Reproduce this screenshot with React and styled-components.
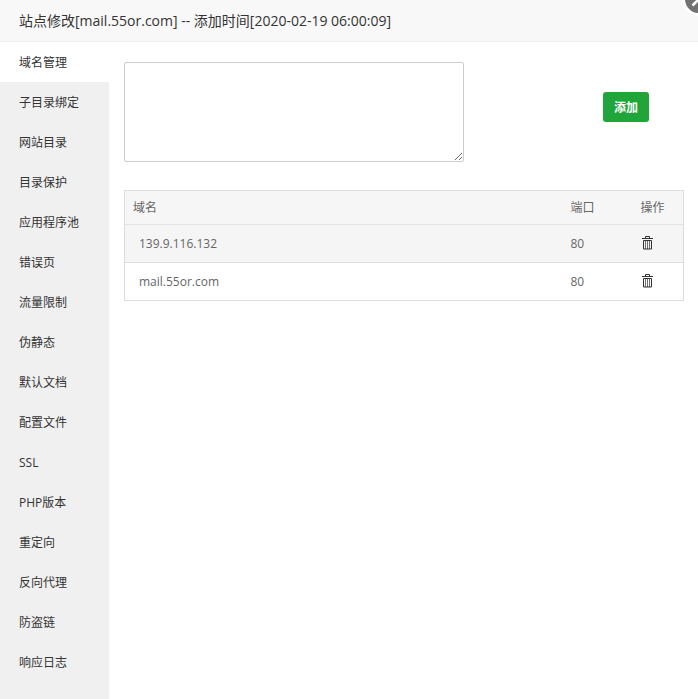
import styled, { createGlobalStyle } from 'styled-components'

const GlobalStyle = createGlobalStyle`
  * {
    box-sizing: border-box;
  }
  body {
    margin: 0;
    overflow: hidden;
    background: #fff;
    color: #333;
    font-family: "Open Sans", "Noto Sans CJK SC", sans-serif;
    font-size: 12px;
  }
`
const DialogStyled = styled('div')`
  position: relative;
  display: flex;
  flex-flow: column nowrap;
  min-height: 100vh;
`
const Title = styled('h1')`
  height: 42px;
  margin: 0;
  padding: 0 19px;
  border-bottom: 1px solid #eee;
  background: #f8f8f8;
  font-size: 14px;
  font-weight: 400;
  line-height: 41px;
`
const CloseButton = styled('button')`
  position: absolute;
  top: -18px;
  right: -18px;
  width: 34px;
  height: 34px;
  padding: 0;
  border: 0;
  background: none;
  cursor: pointer;

  svg {
    display: block;
  }
`
const Body = styled('div')`
  display: flex;
  flex: 1;
`
const Menu = styled('nav')`
  display: flex;
  flex: 0 0 109px;
  flex-flow: column nowrap;
  background: #f0f0f0;
`
const MenuLink = styled('a')`
  height: 40px;
  padding-left: 19px;
  background: ${({ $active }) => ($active ? '#fff' : 'transparent')};
  color: #333;
  line-height: 42px;
  text-decoration: none;
`
const Content = styled('main')`
  flex: 1;
  min-width: 0;
  padding: 20px 14px 20px 15px;
`
const DomainForm = styled('form')`
  display: flex;
  align-items: flex-start;
  justify-content: space-between;
  margin-bottom: 28px;
`
const DomainInput = styled('textarea')`
  width: 340px;
  height: 100px;
  padding: 5px 10px;
  border: 1px solid #ccc;
  border-radius: 2px;
  background: #fff;
  font: inherit;
  line-height: 20px;
  outline: none;
`
const AddButton = styled('button')`
  height: 30px;
  margin: 30px 35px 0 0;
  padding: 0 11px;
  border: 0;
  border-radius: 3px;
  background: #20a53a;
  color: #fff;
  font: inherit;
  font-weight: 700;
  cursor: pointer;
`
const Table = styled('table')`
  width: 100%;
  border: 1px solid #ddd;
  border-collapse: collapse;
  table-layout: fixed;
  color: #666;
`
const HeadCell = styled('th')`
  width: ${({ $width }) => $width || 'auto'};
  height: 34px;
  padding: 0 8px 2px;
  border-bottom: 1px solid #e4e4e4;
  background: #f6f6f6;
  font-weight: 400;
  text-align: left;
`
const Row = styled('tr')`
  height: 38px;
  border-top: 1px solid #ddd;
  background: ${({ $striped }) => ($striped ? '#f5f5f5' : '#fff')};
`
const Cell = styled('td')`
  padding: 0 8px;
`
const ActionCell = styled(Cell)`
  padding-bottom: 2px;
`
const Domain = styled('span')`
  margin-left: 6px;
`
const DeleteButton = styled('button')`
  display: block;
  margin: 0;
  padding: 0;
  border: 0;
  background: none;
  color: #333;
  cursor: pointer;

  svg {
    display: block;
  }
`

const menu = [
  '域名管理',
  '子目录绑定',
  '网站目录',
  '目录保护',
  '应用程序池',
  '错误页',
  '流量限制',
  '伪静态',
  '默认文档',
  '配置文件',
  'SSL',
  'PHP版本',
  '重定向',
  '反向代理',
  '防盗链',
  '响应日志'
]

const domains = [
  { name: '139.9.116.132', port: 80 },
  { name: 'mail.55or.com', port: 80 }
]

const TrashIcon = () => (
  <svg width='13' height='14' viewBox='0 0 13 14' fill='none' stroke='currentColor'>
    <path d='M4.5 2V.5h4V2M1 2.5h11M2.5 4.5h8v8.5h-8z' />
    <path d='M4.5 5v8M6.5 5v8M8.5 5v8' strokeOpacity='.7' />
  </svg>
)

const CloseIcon = () => (
  <svg width='34' height='34' viewBox='0 0 34 34'>
    <circle cx='17' cy='17' r='15.5' fill='#727272' stroke='#fff' strokeWidth='3' />
    <path d='M10.5 10.5l13 13M23.5 10.5l-13 13' stroke='#fff' strokeWidth='2.5' />
  </svg>
)

const DomainRow = ({ name, port, striped }) => (
  <Row $striped={striped}>
    <Cell><Domain>{name}</Domain></Cell>
    <Cell>{port}</Cell>
    <ActionCell><DeleteButton type='button' aria-label='删除'><TrashIcon /></DeleteButton></ActionCell>
  </Row>
)

const App = () => {
  const menuLinks = menu.map((label, index) => (
    <MenuLink key={label} href='#' $active={index === 0}>{label}</MenuLink>
  ))
  const domainRows = domains.map(({ name, port }, index) => (
    <DomainRow key={name} name={name} port={port} striped={index % 2 === 0} />
  ))
  return (
    <DialogStyled>
      <GlobalStyle />
      <Title>站点修改[mail.55or.com] -- 添加时间[2020-02-19 06:00:09]</Title>
      <CloseButton type='button' aria-label='关闭'><CloseIcon /></CloseButton>
      <Body>
        <Menu>{menuLinks}</Menu>
        <Content>
          <DomainForm>
            <DomainInput aria-label='域名' />
            <AddButton type='button'>添加</AddButton>
          </DomainForm>
          <Table>
            <thead>
              <tr>
                <HeadCell>域名</HeadCell>
                <HeadCell $width='70px'>端口</HeadCell>
                <HeadCell $width='51px'>操作</HeadCell>
              </tr>
            </thead>
            <tbody>{domainRows}</tbody>
          </Table>
        </Content>
      </Body>
    </DialogStyled>
  )
}

export default App
